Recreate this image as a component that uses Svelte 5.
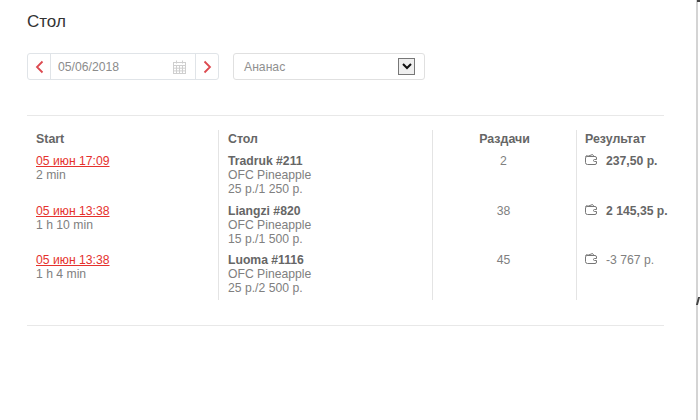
<script>
  const rows = [
    { date: '05 июн 17:09', dur: '2 min', table: 'Tradruk #211', game: 'OFC Pineapple', stakes: '25 р./1 250 р.', hands: 2, result: '237,50 р.', win: true },
    { date: '05 июн 13:38', dur: '1 h 10 min', table: 'Liangzi #820', game: 'OFC Pineapple', stakes: '15 р./1 500 р.', hands: 38, result: '2 145,35 р.', win: true },
    { date: '05 июн 13:38', dur: '1 h 4 min', table: 'Luoma #1116', game: 'OFC Pineapple', stakes: '25 р./2 500 р.', hands: 45, result: '-3 767 р.', win: false }
  ];
</script>

<div class="page">
  <main class="panel">
    <h1>Стол</h1>
    <div class="controls">
      <div class="datepicker">
        <button class="nav" aria-label="Назад">
          <svg width="9" height="14" viewBox="0 0 9 14"><path d="M7.500 1.500 2 7l5.500 5.500" /></svg>
        </button>
        <div class="date">
          <span>05/06/2018</span>
          <svg class="cal" width="13" height="14" viewBox="0 0 13 14">
            <rect x="0.5" y="2.5" width="12" height="11" />
            <path d="M3.500 0.500v3M9.500 0.500v3M0.500 5.500h12M0.500 8.200h12M0.500 10.900h12M3.500 5.500v8M6.500 5.500v8M9.500 5.500v8" />
          </svg>
        </div>
        <button class="nav" aria-label="Вперёд">
          <svg width="9" height="14" viewBox="0 0 9 14"><path d="M1.500 1.500 7 7l-5.500 5.500" /></svg>
        </button>
      </div>
      <div class="select">
        <span>Ананас</span>
        <span class="arrow">
          <svg width="10" height="7" viewBox="0 0 10 7"><path d="M1 1l4 4 4-4" /></svg>
        </span>
      </div>
    </div>

    <div class="table">
      <div class="col c1">
        <div class="head">Start</div>
        {#each rows as r}
          <div class="row"><a href="#top">{r.date}</a><div>{r.dur}</div></div>
        {/each}
      </div>
      <div class="col c2">
        <div class="head">Стол</div>
        {#each rows as r}
          <div class="row"><b>{r.table}</b><div>{r.game}</div><div>{r.stakes}</div></div>
        {/each}
      </div>
      <div class="col c3">
        <div class="head">Раздачи</div>
        {#each rows as r}
          <div class="row">{r.hands}</div>
        {/each}
      </div>
      <div class="col c4">
        <div class="head">Результат</div>
        {#each rows as r}
          <div class="row result" class:win={r.win}>
            <svg width="13" height="13" viewBox="0 0 13 13">
              <path d="M1 4 7.500 1.500 9 3.500" />
              <path d="M2.500 3.500h7.500a1.500 1.500 0 0 1 1.500 1.500v1.500h-2a1 1 0 0 0 0 2h2v1.500a1.500 1.500 0 0 1-1.500 1.500h-7.500a2 2 0 0 1-2-2v-5a2 2 0 0 1 2-2" />
            </svg>
            <span>{r.result}</span>
          </div>
        {/each}
      </div>
    </div>
    <div class="end"></div>
  </main>
  <div class="edge top"></div>
  <div class="edge mark"></div>
</div>

<style>
  :global(body) {
    margin: 0;
    background: #fff;
  }
  .page {
    position: relative;
    width: 700px;
    height: 420px;
    overflow: hidden;
    font-family: "Liberation Sans", Arial, sans-serif;
    font-size: 12.200px;
    line-height: 14px;
    color: #808080;
  }
  .panel {
    box-sizing: border-box;
    width: 698px;
    height: 420px;
    padding: 12px 33px 0 27px;
    border-right: 2px solid #d4d4d4;
  }
  h1 {
    margin: 0;
    font-size: 17px;
    font-weight: 400;
    line-height: 19px;
    color: #333;
  }
  .controls {
    display: flex;
    gap: 14px;
    margin-top: 22px;
  }
  .datepicker {
    box-sizing: border-box;
    display: flex;
    width: 192px;
    height: 27px;
    border: 1px solid #e0e4e8;
    border-radius: 3px;
  }
  .nav {
    flex: none;
    display: flex;
    align-items: center;
    justify-content: center;
    width: 22px;
    padding: 0;
    border: 0;
    background: none;
  }
  .nav path {
    fill: none;
    stroke: #dc4a50;
    stroke-width: 1.800;
  }
  .date {
    flex: 1;
    display: flex;
    align-items: center;
    justify-content: space-between;
    padding: 0 9px 0 7px;
    border-left: 1px solid #e0e4e8;
    border-right: 1px solid #e0e4e8;
    color: #8c8c8c;
  }
  .cal rect, .cal path {
    fill: none;
    stroke: #cfcfcf;
    stroke-width: 1;
  }
  .select {
    box-sizing: border-box;
    display: flex;
    align-items: center;
    justify-content: space-between;
    width: 192px;
    height: 27px;
    padding: 0 9px 0 10px;
    border: 1px solid #e0e0e0;
    border-radius: 3px;
    color: #909090;
  }
  .arrow {
    box-sizing: border-box;
    display: flex;
    align-items: center;
    justify-content: center;
    width: 17px;
    height: 17px;
    border: 1px solid #777;
    background: #efefef;
  }
  .arrow path {
    fill: none;
    stroke: #111;
    stroke-width: 2;
  }
  .table {
    display: grid;
    grid-template-columns: 192px 214px 144px 87px;
    margin-top: 35px;
    padding: 14px 0 0;
    border-top: 1px solid #e8e8e8;
    height: 170px;
    width: 637px;
  }
  .col {
    box-sizing: border-box;
    height: 170px;
    padding-left: 9px;
    border-right: 1px solid #e4e4e4;
  }
  .c4 {
    padding-left: 8px;
    border-right: 0;
  }
  .head {
    font-weight: 700;
    font-size: 12.400px;
    color: #666;
    margin-bottom: 5px;
    line-height: 19px;
    height: 19px;
  }
  .row {
    height: 49.500px;
  }
  .row a {
    color: #e5322d;
    text-decoration: underline;
    display: block;
  }
  .row b {
    color: #666;
    display: block;
  }
  .c3 {
    padding-left: 0;
    text-align: center;
  }
  .c3 .row {
    padding-right: 2px;
  }
  .result {
    display: flex;
    gap: 8px;
    align-items: flex-start;
    white-space: nowrap;
  }
  .result svg {
    flex: none;
    margin-top: -1px;
  }
  .result path {
    fill: none;
    stroke: #777;
    stroke-width: 1;
  }
  .result.win span {
    font-weight: 700;
    color: #666;
  }
  .end {
    margin-top: 25px;
    width: 637px;
    border-top: 1px solid #e8e8e8;
  }
  .edge {
    position: absolute;
    background: #444;
  }
  .edge.top {
    right: 0;
    top: 0;
    width: 3px;
    height: 2px;
  }
  .edge.mark {
    left: 697px;
    top: 297px;
    width: 2px;
    height: 8px;
    transform: skewX(-15deg);
  }
</style>
